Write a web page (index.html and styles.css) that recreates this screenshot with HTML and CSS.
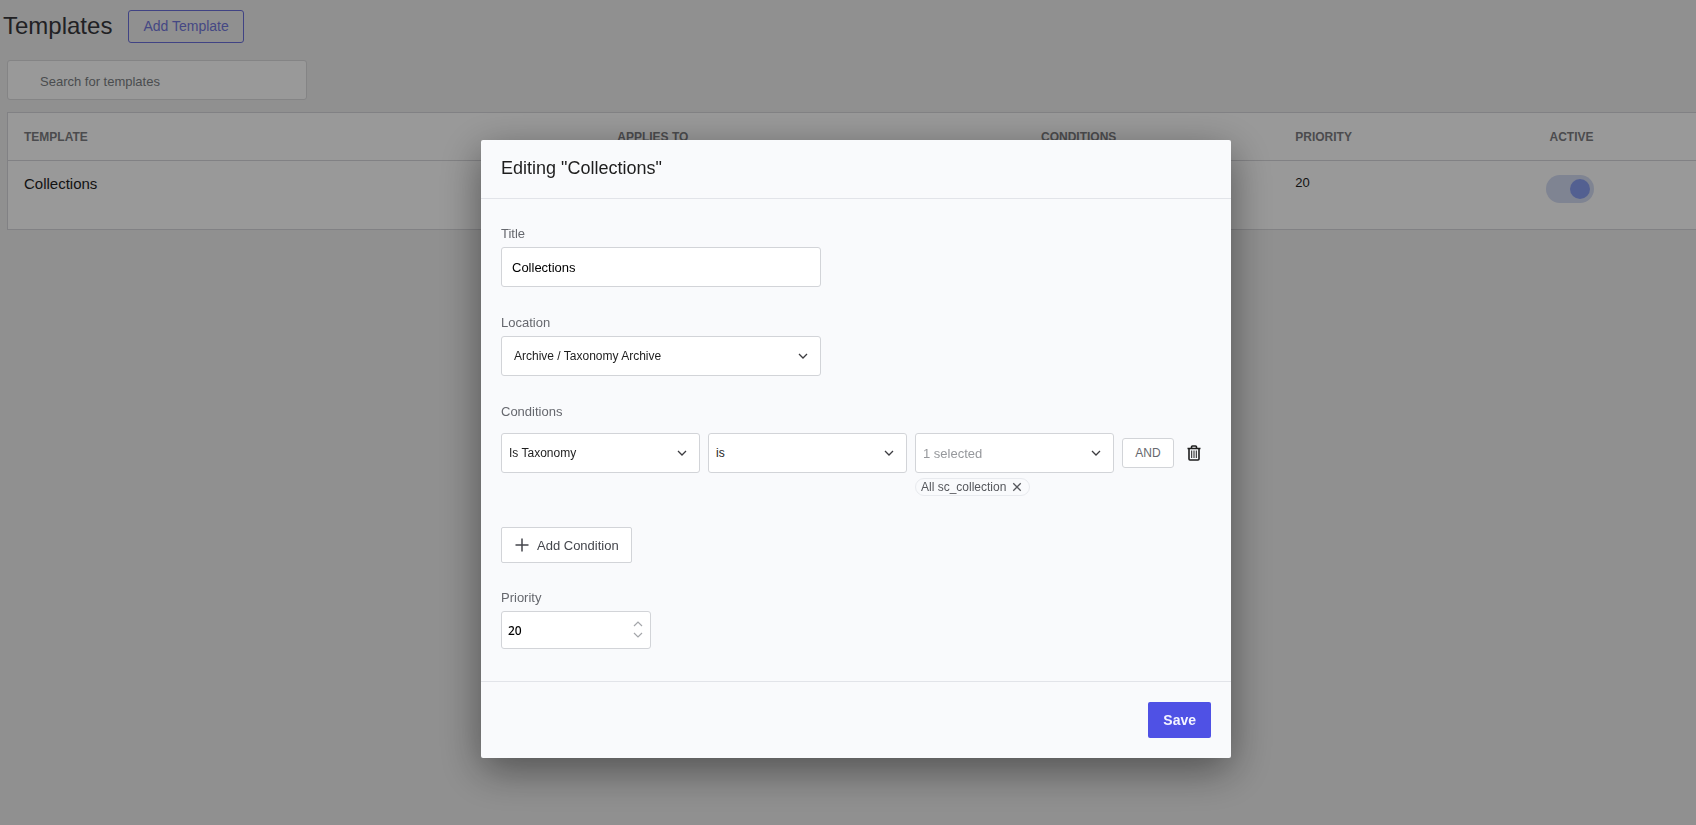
FILE: index.html
```html
<!DOCTYPE html>
<html lang="en">

<head>
  <meta charset="UTF-8" />
  <meta name="viewport" content="width=device-width, initial-scale=1.0" />
  <title>Templates</title>
  <link rel="stylesheet" href="styles.css">
</head>

<body>

  <main class="page">
    <div class="page-header">
      <h1>Templates</h1>
      <button type="button" class="btn-outline">Add Template</button>
    </div>

    <input type="search" class="search" placeholder="Search for templates" aria-label="Search for templates" />

    <table class="templates">
      <thead>
        <tr>
          <th class="col-template">Template</th>
          <th class="col-applies">Applies to</th>
          <th class="col-conditions">Conditions</th>
          <th class="col-priority">Priority</th>
          <th class="col-active">Active</th>
        </tr>
      </thead>
      <tbody>
        <tr>
          <td class="template-name">Collections</td>
          <td></td>
          <td></td>
          <td>20</td>
          <td class="cell-toggle"><input type="checkbox" class="toggle" aria-label="Active" checked /></td>
        </tr>
      </tbody>
    </table>
  </main>

  <!-- Edit template modal -->
  <div class="overlay">
    <form class="modal" role="dialog" aria-labelledby="modalTitle">
      <header class="modal-header">
        <h2 id="modalTitle">Editing "Collections"</h2>
      </header>

      <div class="modal-body">
        <div class="field">
          <label for="title">Title</label>
          <input type="text" id="title" class="control" value="Collections" />
        </div>

        <div class="field">
          <label for="location">Location</label>
          <div class="select">
            <select id="location" class="control">
              <option>Archive / Taxonomy Archive</option>
            </select>
            <svg class="chevron" viewBox="0 0 10 6"><path d="M1 1l4 4 4-4" /></svg>
          </div>
        </div>

        <div class="field field-conditions">
          <label for="condition">Conditions</label>
          <div class="condition">
            <div class="select">
              <select id="condition" class="control">
                <option>Is Taxonomy</option>
              </select>
              <svg class="chevron" viewBox="0 0 10 6"><path d="M1 1l4 4 4-4" /></svg>
            </div>
            <div class="select">
              <select class="control" aria-label="Comparison">
                <option>is</option>
              </select>
              <svg class="chevron" viewBox="0 0 10 6"><path d="M1 1l4 4 4-4" /></svg>
            </div>
            <div class="values">
              <div class="select">
                <select class="control muted" aria-label="Values">
                  <option>1 selected</option>
                </select>
                <svg class="chevron" viewBox="0 0 10 6"><path d="M1 1l4 4 4-4" /></svg>
              </div>
              <span class="chip">All sc_collection
                <button type="button" class="chip-remove" aria-label="Remove">
                  <svg viewBox="0 0 8 8"><path d="M1 1l6 6M7 1l-6 6" /></svg>
                </button>
              </span>
            </div>
            <button type="button" class="btn-and">AND</button>
            <button type="button" class="btn-trash" aria-label="Delete condition">
              <svg viewBox="0 0 14 16">
                <path d="M.5 3.5h13M4.5 3.5V2q0-1 1-1h3q1 0 1 1v1.5M2 3.5V14q0 1 1 1h8q1 0 1-1V3.5" />
                <path class="thin" d="M4.7 5.5V13M7 5.5V13M9.3 5.5V13" />
              </svg>
            </button>
          </div>
        </div>

        <button type="button" class="btn-add">
          <svg viewBox="0 0 14 14"><path d="M7 .5v13M.5 7h13" /></svg>
          Add Condition
        </button>

        <div class="field field-priority">
          <label for="priority">Priority</label>
          <div class="number">
            <input type="number" id="priority" class="control" value="20" />
            <div class="steps">
              <button type="button" aria-label="Increase"><svg viewBox="0 0 10 6"><path d="M1 5l4-4 4 4" /></svg></button>
              <button type="button" aria-label="Decrease"><svg viewBox="0 0 10 6"><path d="M1 1l4 4 4-4" /></svg></button>
            </div>
          </div>
        </div>
      </div>

      <footer class="modal-footer">
        <button type="submit" class="btn-save">Save</button>
      </footer>
    </form>
  </div>

</body>

</html>
```

FILE: styles.css
```css
* {
  box-sizing: border-box;
}

body {
  margin: 0;
  min-height: 100vh;
  overflow: hidden;
  background: #f0f0f0;
  color: #1e1e1e;
  font-family: "Liberation Sans", Arial, sans-serif;
  font-size: 13px;
}

button,
input,
select {
  font: inherit;
  margin: 0;
}

button {
  cursor: pointer;
}

svg {
  display: block;
  fill: none;
  stroke: currentColor;
}

.page {
  margin-right: -8px;
  padding: 10px 0 0 7px;
}

.page-header {
  display: flex;
  align-items: center;
  gap: 16px;
  margin-left: -4px;
  margin-bottom: 17px;
}

h1 {
  margin: 0;
  padding-bottom: 2px;
  font-size: 24px;
  line-height: 28px;
  font-weight: 400;
  color: #38383c;
}

.btn-outline {
  height: 33px;
  padding: 0 14px 2px;
  background: transparent;
  border: 1px solid #6c70dc;
  border-radius: 3px;
  color: #7478dc;
  font-size: 14px;
}

.search {
  display: block;
  width: 300px;
  height: 40px;
  padding: 2px 32px 0;
  margin-bottom: 12px;
  background: #fff;
  border: 1px solid #dcdcde;
  border-radius: 3px;
}

.search::placeholder {
  color: #7c7f84;
}

/* Template list */
.templates {
  width: 100%;
  table-layout: fixed;
  border-collapse: separate;
  border-spacing: 0;
  background: #fff;
  border: 1px solid #d8d8dc;
}

.templates th {
  height: 48px;
  padding: 0 16px;
  border-bottom: 1px solid #d8d8dc;
  text-align: left;
  text-transform: uppercase;
  font-size: 12px;
  font-weight: 700;
  color: #7e7e82;
}

.templates td {
  height: 68px;
  padding: 14px 16px;
  vertical-align: top;
}

.col-template { width: 35%; }
.col-applies { width: 25%; }
.col-conditions { width: 15%; }
.col-priority { width: 15%; }
.col-active { width: 10%; }

.templates .template-name {
  font-size: 15px;
}

.templates .cell-toggle {
  padding: 14px 12px;
}

.toggle {
  appearance: none;
  display: flex;
  justify-content: flex-end;
  align-items: center;
  width: 48px;
  height: 28px;
  padding: 4px;
  background: #d4dcf4;
  border-radius: 14px;
}

.toggle::before {
  content: "";
  width: 20px;
  height: 20px;
  border-radius: 50%;
  background: #8ba0f2;
}

/* Modal */
.overlay {
  position: fixed;
  inset: 0;
  display: flex;
  justify-content: center;
  align-items: flex-start;
  padding: 140px 0 0 16px;
  background: rgba(0, 0, 0, 0.4);
}

.modal {
  width: 100%;
  max-width: 750px;
  background: #f9fafc;
  border-radius: 2px;
  box-shadow: 0 12px 42px rgba(0, 0, 0, 0.45);
}

.modal-header {
  padding: 16px 20px 18px;
  border-bottom: 1px solid #e2e4e9;
}

h2 {
  margin: 0;
  font-size: 18px;
  line-height: 24px;
  font-weight: 400;
}

.modal-body {
  padding: 27px 20px 32px;
}

.field {
  width: 320px;
  margin-bottom: 28px;
}

.field > label {
  display: block;
  margin-bottom: 5px;
  line-height: 16px;
  color: #66686e;
}

.control {
  display: block;
  width: 100%;
  height: 40px;
  padding: 0 10px;
  background: #fff;
  border: 1px solid #d2d4d8;
  border-radius: 3px;
  color: #000;
}

.select {
  position: relative;
  flex: 1;
}

.select .control {
  appearance: none;
  padding: 0 28px 0 12px;
  font-size: 12px;
  color: #1e1e1e;
}

.chevron {
  position: absolute;
  top: 17px;
  right: 13px;
  width: 10px;
  height: 6px;
  stroke-width: 1.3;
  color: #3c3c40;
  pointer-events: none;
}

.field-conditions {
  width: auto;
  margin-bottom: 31px;
}

.field-conditions > label {
  margin-bottom: 13px;
}

.condition {
  display: flex;
  align-items: flex-start;
  gap: 8px;
}

.condition .select .control {
  padding-left: 7px;
}

.values {
  flex: 1;
}

.condition .select .muted {
  font-size: 13px;
  color: #96989c;
}

.chip {
  display: inline-flex;
  align-items: center;
  gap: 6px;
  height: 18px;
  margin-top: 5px;
  padding: 0 7px 0 5px;
  border: 1px solid #e8eaee;
  border-radius: 9px;
  font-size: 12px;
  color: #55575c;
}

.chip-remove {
  padding: 0;
  background: none;
  border: 0;
  color: inherit;
}

.chip-remove svg {
  width: 10px;
  height: 10px;
  stroke-width: 1;
}

.btn-and {
  width: 52px;
  height: 30px;
  margin-top: 5px;
  padding: 0;
  background: #fff;
  border: 1px solid #d2d4d8;
  border-radius: 3px;
  font-size: 12px;
  color: #66686e;
}

.btn-trash {
  width: 24px;
  height: 40px;
  margin: 0 5px 0 0;
  padding: 0 5px;
  background: none;
  border: 0;
  color: #1e1e1e;
}

.btn-trash svg {
  width: 14px;
  height: 16px;
  stroke-width: 1.6;
}

.btn-trash .thin {
  stroke-width: 1;
}

.btn-add {
  display: flex;
  align-items: center;
  gap: 8px;
  height: 36px;
  margin-bottom: 27px;
  padding: 0 12px 0 13px;
  background: #fff;
  border: 1px solid #d2d4d8;
  border-radius: 2px;
  color: #44464c;
}

.btn-add svg {
  width: 14px;
  height: 14px;
  stroke-width: 1.5;
}

.field-priority {
  width: 150px;
  margin-bottom: 0;
}

.number {
  position: relative;
}

.number .control {
  appearance: textfield;
  height: 38px;
  padding: 0 28px 0 6px;
  font-family: "Noto Sans", sans-serif;
  font-size: 12px;
  font-weight: 500;
}

.steps {
  position: absolute;
  top: 10px;
  right: 8px;
  display: grid;
  gap: 5px;
}

.steps button {
  padding: 0;
  background: none;
  border: 0;
  color: #a4a6aa;
}

.steps svg {
  width: 10px;
  height: 6px;
  stroke-width: 1.2;
}

.modal-footer {
  display: flex;
  justify-content: flex-end;
  padding: 20px;
  border-top: 1px solid #e2e4e9;
}

.btn-save {
  height: 36px;
  padding: 0 15px;
  background: #4f51e5;
  border: 0;
  border-radius: 2px;
  color: #f4f4ff;
  font-size: 14px;
  font-weight: 700;
}
```
